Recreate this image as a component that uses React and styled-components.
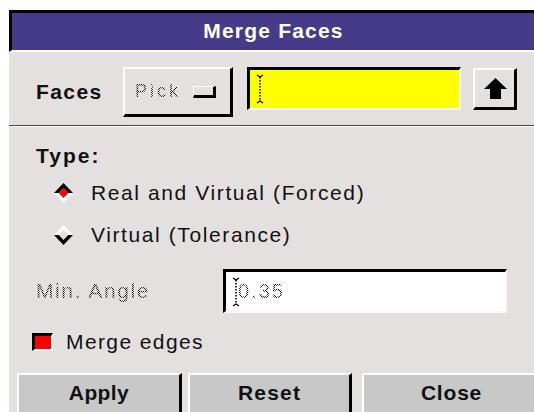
import React from 'react';
import styled, { createGlobalStyle, css } from 'styled-components';

const GlobalStyle = createGlobalStyle`
   html, body {
      margin: 0;
      padding: 0;
      background: #fff;
      overflow: hidden;
   }

   body {
      padding: 10px 0 0 9px;
      font-family: "Liberation Sans", Arial, sans-serif;
   }
`;

// greyed-out text drawn as a 2px checker, like a disabled Tk label
const stipple = css`
   color: transparent;
   background-image: repeating-conic-gradient(#111 0 25%, transparent 0 50%);
   background-size: 2px 2px;
   -webkit-background-clip: text;
   background-clip: text;
`;

const Cursor = () => (
   <svg width='8' height='30' viewBox='0 0 8 30'>
      <path d='M1 1 L4 3 L7 1 M1 29 L4 27 L7 29' stroke='#000' strokeWidth='1.3' fill='none' />
      <line x1='4' y1='3' x2='4' y2='27' stroke='#000' strokeWidth='1.6' strokeDasharray='1.5 1.5' />
   </svg>
);

const ArrowUp = () => (
   <svg width='23' height='21' viewBox='0 0 23 21'>
      <polygon points='11.5,0 23,11 17,11 17,21 6,21 6,11 0,11' fill='#000' />
   </svg>
);

const Diamond = ({ checked }) => (
   <svg width='19' height='20' viewBox='0 0 18 18' preserveAspectRatio='none'>
      <polygon points='0,9 9,0 18,9 13.5,9 9,4.5 4.5,9' fill={checked ? '#000' : '#fff'} />
      <polygon points='0,9 9,18 18,9 13.5,9 9,13.5 4.5,9' fill={checked ? '#fff' : '#000'} />
      {checked && <polygon points='4.5,9 9,4.5 13.5,9 9,13.5' fill='#f00' />}
   </svg>
);

export default function App() {
   return (
      <>
         <GlobalStyle />
         <Dialog>
            <TitleBar>Merge Faces</TitleBar>

            <FacesRow>
               <FieldLabel>Faces</FieldLabel>
               <PickButton>
                  <PickText>Pick</PickText>
                  <MenuIndicator />
               </PickButton>
               <Entry $bg='#ffff00' $width={214} $height={43}>
                  <Cursor />
               </Entry>
               <ArrowButton>
                  <ArrowUp />
               </ArrowButton>
            </FacesRow>

            <Separator />

            <Section>
               <TypeLabel>Type:</TypeLabel>
               <RadioRow>
                  <Diamond checked />
                  <OptionText>Real and Virtual (Forced)</OptionText>
               </RadioRow>
               <RadioRow>
                  <Diamond />
                  <OptionText>Virtual (Tolerance)</OptionText>
               </RadioRow>

               <AngleRow>
                  <DisabledLabel>Min. Angle</DisabledLabel>
                  <Entry $bg='#fff' $width={284} $height={44}>
                     <Cursor />
                     <DisabledValue>0.35</DisabledValue>
                  </Entry>
               </AngleRow>

               <CheckRow>
                  <CheckBox />
                  <OptionText $spacing={1.4}>Merge edges</OptionText>
               </CheckRow>
            </Section>

            <ButtonRow>
               <ActionButton $width={165} $gap={6} $spacing={0.4}>Apply</ActionButton>
               <ActionButton $width={164} $gap={10} $spacing={1.2}>Reset</ActionButton>
               <ActionButton $width={180} $spacing={0.8}>Close</ActionButton>
            </ButtonRow>
         </Dialog>
      </>
   );
}

const Dialog = styled.div`
   width: 526px;
   height: 402px;
   background: #e5e0e0;
   overflow: hidden;
   display: flex;
   flex-direction: column;
`;

const TitleBar = styled.div`
   box-sizing: border-box;
   height: 42px;
   flex: none;
   display: flex;
   align-items: center;
   justify-content: center;
   background: #463b89;
   border-top: 3px solid #000;
   border-left: 3px solid #000;
   border-bottom: 2px solid #fff;
   color: #fff;
   font-weight: bold;
   font-size: 21px;
   letter-spacing: 1.2px;
   padding-bottom: 2px;
`;

const FacesRow = styled.div`
   box-sizing: border-box;
   height: 73px;
   flex: none;
   display: flex;
   align-items: flex-start;
   padding: 15px 0 0 27px;
`;

const FieldLabel = styled.div`
   width: 87px;
   flex: none;
   line-height: 50px;
   font-weight: bold;
   font-size: 21px;
   letter-spacing: 1.4px;
   color: #111;
`;

const PickButton = styled.div`
   box-sizing: border-box;
   width: 110px;
   height: 50px;
   flex: none;
   display: flex;
   align-items: center;
   padding-left: 10px;
   border-top: 2px solid #fff;
   border-left: 2px solid #fff;
   border-right: 3px solid #000;
   border-bottom: 3px solid #000;
`;

const PickText = styled.span`
   font-size: 18px;
   letter-spacing: 3px;
   ${stipple}
`;

const MenuIndicator = styled.span`
   box-sizing: border-box;
   width: 23px;
   height: 12px;
   margin-left: auto;
   margin-right: 14px;
   border-top: 1px solid #fff;
   border-left: 1px solid #fff;
   border-right: 3px solid #000;
   border-bottom: 3px solid #000;
`;

const Entry = styled.div`
   box-sizing: border-box;
   width: ${({ $width }) => $width}px;
   height: ${({ $height }) => $height}px;
   flex: none;
   display: flex;
   align-items: center;
   padding-left: 6px;
   margin-left: 14px;
   background: ${({ $bg }) => $bg};
   border-top: 3px solid #000;
   border-left: 3px solid #000;
   border-right: 2px solid #f8f8f8;
   border-bottom: 2px solid #f8f8f8;
`;

const ArrowButton = styled.div`
   box-sizing: border-box;
   width: 44px;
   height: 42px;
   flex: none;
   margin: 1px 0 0 12px;
   display: flex;
   align-items: center;
   justify-content: center;
   padding: 0 0 1px 1px;
   border-top: 2px solid #fff;
   border-left: 2px solid #fff;
   border-right: 3px solid #000;
   border-bottom: 3px solid #000;
`;

const Separator = styled.div`
   flex: none;
   height: 0;
   border-top: 1px solid #4a4a4a;
   border-bottom: 1px solid #fff;
`;

const Section = styled.div`
   display: flex;
   flex-direction: column;
   padding-left: 27px;
`;

const TypeLabel = styled.div`
   height: 30px;
   line-height: 30px;
   margin-top: 14px;
   font-weight: bold;
   font-size: 21px;
   letter-spacing: 2px;
   color: #111;
`;

const RadioRow = styled.div`
   height: 42px;
   display: flex;
   align-items: center;
   gap: 18px;
   padding: 2px 0 0 18px;
   box-sizing: border-box;
`;

const OptionText = styled.span`
   font-size: 21px;
   letter-spacing: ${({ $spacing }) => $spacing ?? 1.6}px;
   color: #111;
`;

const AngleRow = styled.div`
   display: flex;
   align-items: center;
   margin-top: 14px;

   ${Entry} {
      margin-left: 0;
   }
`;

const DisabledLabel = styled.span`
   width: 187px;
   flex: none;
   font-size: 21px;
   letter-spacing: 1.6px;
   ${stipple}
`;

const DisabledValue = styled.span`
   margin-left: -2px;
   font-size: 20px;
   letter-spacing: 2px;
   ${stipple}
`;

const CheckRow = styled.div`
   height: 18px;
   display: flex;
   align-items: center;
   gap: 13px;
   margin: 20px 0 0 -4px;
`;

const CheckBox = styled.span`
   box-sizing: border-box;
   width: 21px;
   height: 18px;
   flex: none;
   background: #f00;
   border-top: 3px solid #000;
   border-left: 3px solid #000;
   border-right: 2px solid #fff;
   border-bottom: 2px solid #fff;
`;

const ButtonRow = styled.div`
   display: flex;
   margin-top: 22px;
   padding-left: 8px;
`;

const ActionButton = styled.div`
   box-sizing: border-box;
   width: ${({ $width }) => $width}px;
   margin-right: ${({ $gap }) => $gap || 0}px;
   height: 42px;
   flex: none;
   display: flex;
   align-items: center;
   justify-content: center;
   padding-bottom: 4px;
   background: #c8c8c8;
   border-top: 2px solid #fff;
   border-left: 2px solid #fff;
   border-right: 3px solid #000;
   font-weight: bold;
   font-size: 21px;
   letter-spacing: ${({ $spacing }) => $spacing}px;
   color: #111;
`;
